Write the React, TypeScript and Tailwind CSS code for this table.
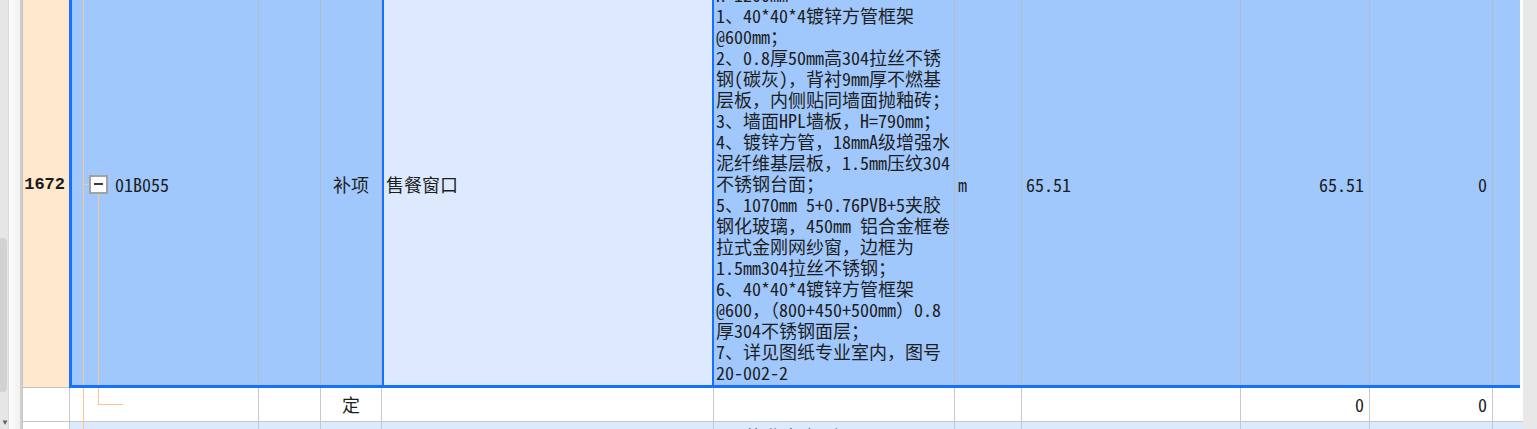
import React from 'react'

const cjk =
  "font-['Noto_Sans_CJK_SC',sans-serif] text-[18px] leading-[21px] text-[#1e1e1e]"

// latin runs get half-width glyphs, cjk punctuation stays full width
function Txt({ s }: { s: string }) {
  const parts = s.split(/([\x20-\x7e]+)/).filter((p) => p !== '')
  return (
    <>
      {parts.map((p, i) =>
        /^[\x20-\x7e]+$/.test(p) ? (
          <span key={i} className="[font-feature-settings:'hwid']">
            {p}
          </span>
        ) : (
          <span key={i}>{p}</span>
        )
      )}
    </>
  )
}

const descLines = [
  'H=1200mm',
  '1、40*40*4镀锌方管框架',
  '@600mm；',
  '2、0.8厚50mm高304拉丝不锈',
  '钢(碳灰)，背衬9mm厚不燃基',
  '层板，内侧贴同墙面抛釉砖；',
  '3、墙面HPL墙板，H=790mm；',
  '4、镀锌方管，18mmA级增强水',
  '泥纤维基层板，1.5mm压纹304',
  '不锈钢台面；',
  '5、1070mm 5+0.76PVB+5夹胶',
  '钢化玻璃，450mm 铝合金框卷',
  '拉式金刚网纱窗，边框为',
  '1.5mm304拉丝不锈钢；',
  '6、40*40*4镀锌方管框架',
  '@600，（800+450+500mm）0.8',
  '厚304不锈钢面层；',
  '7、详见图纸专业室内，图号',
  '20-002-2'
]

function TreeBox() {
  return (
    <div className="relative z-10 flex h-[19px] w-[19px] shrink-0 items-center justify-center border-2 border-[#a2a2a2] bg-white">
      <div className="h-[2px] w-[9px] bg-[#3a3a3a]" />
    </div>
  )
}

export default function App() {
  return (
    <div className="flex h-[429px] w-[1537px] overflow-hidden bg-[#e8e8e8]">
      {/* left strip with scroll thumb */}
      <div className="flex w-[22px] shrink-0">
        <div className="flex w-[8px] flex-col bg-[#e6e6e6]">
          <div className="h-[238px] shrink-0" />
          <div className="h-[154px] w-[7px] shrink-0 rounded-r-[4px] bg-[#d2d2d2]" />
          <div className="flex-1" />
          <div className="mb-[3px] pl-[1px] text-[8px] leading-[8px] text-[#606060]">▼</div>
        </div>
        <div className="w-[12px] border-l border-[#dadada] bg-gradient-to-r from-[#fdfdfd] to-[#f1f1f1]" />
        <div className="w-[2px] bg-[#cfcfcf]" />
      </div>

      {/* grid */}
      <div className="-mt-[17px] flex w-[1501px] shrink-0 flex-col bg-white">
        {/* selected row */}
        <div className="flex shrink-0">
          <div className="flex w-[47px] shrink-0 items-center justify-end border-b border-l border-[#c4c4c4] bg-[#ffe8cc] pr-[4px]">
            <span className="font-['Liberation_Mono',monospace] text-[17px] font-bold text-[#1a1a1a]">1672</span>
          </div>
          <div className="flex border-b-[3px] border-l-[3px] border-[#1570ff] bg-[#a0c8fc]">
            <div className="relative flex w-[187px] shrink-0 items-center border-r border-[#b4bcc6] pl-[17px]">
              <div className="absolute bottom-0 left-[11px] top-0 w-px bg-[#f9c78c]" />
              <div className="absolute left-[11px] top-1/2 h-px w-[6px] bg-[#f9c78c]" />
              <div className="absolute bottom-0 left-[26px] top-[calc(50%+8px)] w-px bg-[#f9c78c]" />
              <TreeBox />
              <span className={`${cjk} ml-[7px]`}>
                <Txt s="01B055" />
              </span>
            </div>
            <div className="w-[62px] shrink-0 border-r border-[#b4bcc6]" />
            <div className="flex w-[61px] shrink-0 items-center justify-center border-r border-[#b4bcc6]">
              <span className={cjk}>补项</span>
            </div>
            <div className="flex w-[332px] shrink-0 items-center border-x-2 border-[#1570ff] bg-[#dde9fc] pl-[2px]">
              <span className={cjk}>售餐窗口</span>
            </div>
            <div className="w-[241px] shrink-0 border-r border-[#b4bcc6] pb-[2px] pl-[2px] pt-[1px]">
              {descLines.map((line, i) => (
                <div key={i} className={`${cjk} whitespace-pre`}>
                  <Txt s={line} />
                </div>
              ))}
            </div>
            <div className="flex w-[67px] shrink-0 items-center border-r border-[#b4bcc6] pl-[3px]">
              <span className={cjk}>
                <Txt s="m" />
              </span>
            </div>
            <div className="flex w-[219px] shrink-0 items-center border-r border-[#b4bcc6] pl-[4px]">
              <span className={cjk}>
                <Txt s="65.51" />
              </span>
            </div>
            <div className="flex w-[129px] shrink-0 items-center justify-end border-r border-[#b4bcc6] pr-[5px]">
              <span className={cjk}>
                <Txt s="65.51" />
              </span>
            </div>
            <div className="flex w-[123px] shrink-0 items-center justify-end border-r border-[#b4bcc6] pr-[5px]">
              <span className={cjk}>
                <Txt s="0" />
              </span>
            </div>
            <div className="w-[27px] shrink-0" />
          </div>
        </div>

        {/* child row */}
        <div className="flex h-[34px] shrink-0 border-b border-[#c8c8c8] bg-white">
          <div className="w-[48px] shrink-0 border-x border-[#c8c8c8]" />
          <div className="relative w-[189px] shrink-0 border-r border-[#c8c8c8]">
            <div className="absolute bottom-0 left-[13px] top-0 w-px bg-[#f9c78c]" />
            <div className="absolute left-[28px] top-0 h-1/2 w-[25px] border-b border-l border-[#f9c78c]" />
          </div>
          <div className="w-[62px] shrink-0 border-r border-[#c8c8c8]" />
          <div className="flex w-[61px] shrink-0 items-center justify-center border-r border-[#c8c8c8]">
            <span className={cjk}>定</span>
          </div>
          <div className="w-[332px] shrink-0 border-r border-[#c8c8c8]" />
          <div className="w-[241px] shrink-0 border-r border-[#c8c8c8]" />
          <div className="w-[67px] shrink-0 border-r border-[#c8c8c8]" />
          <div className="w-[219px] shrink-0 border-r border-[#c8c8c8]" />
          <div className="flex w-[129px] shrink-0 items-center justify-end border-r border-[#c8c8c8] pr-[5px]">
            <span className={cjk}>
              <Txt s="0" />
            </span>
          </div>
          <div className="flex w-[123px] shrink-0 items-center justify-end border-r border-[#c8c8c8] pr-[5px]">
            <span className={cjk}>
              <Txt s="0" />
            </span>
          </div>
          <div className="w-[30px] shrink-0" />
        </div>

        {/* next row, cut off */}
        <div className="flex h-[34px] shrink-0">
          <div className="w-[48px] shrink-0 border-x border-[#c8c8c8] bg-white" />
          <div className="flex flex-1 bg-[#dde9fc]">
            <div className="relative w-[189px] shrink-0 border-r border-[#c8c8c8]">
              <div className="absolute bottom-0 left-[13px] top-0 w-px bg-[#f9c78c]" />
            </div>
            <div className="w-[62px] shrink-0 border-r border-[#c8c8c8]" />
            <div className="w-[61px] shrink-0 border-r border-[#c8c8c8]" />
            <div className="w-[332px] shrink-0 border-r border-[#c8c8c8]" />
            <div className="w-[241px] shrink-0 border-r border-[#c8c8c8] pl-[14px] pt-[4px]">
              <div className={`${cjk} whitespace-pre`}>
                <Txt s="、执业中许(含)" />
              </div>
            </div>
            <div className="w-[67px] shrink-0 border-r border-[#c8c8c8]" />
            <div className="w-[219px] shrink-0 border-r border-[#c8c8c8]" />
            <div className="w-[129px] shrink-0 border-r border-[#c8c8c8]" />
            <div className="w-[123px] shrink-0 border-r border-[#c8c8c8]" />
            <div className="w-[30px] shrink-0" />
          </div>
        </div>
      </div>

      <div className="w-[14px] shrink-0 bg-[#e8e8e8]" />
    </div>
  )
}
